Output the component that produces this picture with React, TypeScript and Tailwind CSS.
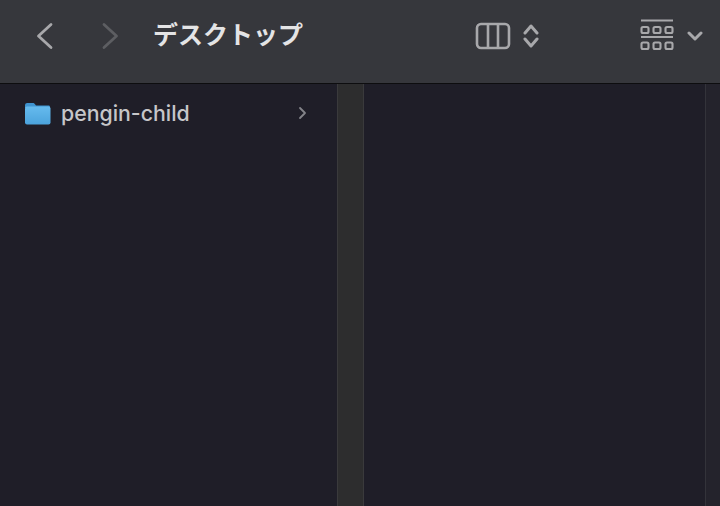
export default function App() {
  const font = { fontFamily: '"Inter","Noto Sans CJK JP",sans-serif' };
  return (
    <div className="w-[720px] h-[506px] flex flex-col overflow-hidden bg-[#1f1e28]" style={font}>
      <header className="h-[84px] shrink-0 flex items-center bg-[#36373c] border-b border-[#0d0d0f] text-[#b4b4b6] relative">
        <div className="flex items-center pl-[36px] pb-[12px]">
          <svg width="18" height="28" viewBox="0 0 18 28" fill="none" stroke="#a8a8ab" strokeWidth="2.8" strokeLinecap="round" strokeLinejoin="round"><path d="M15 2.500 2.500 14 15 25.500" /></svg>
          <svg className="ml-[47px]" width="18" height="28" viewBox="0 0 18 28" fill="none" stroke="#5d5e62" strokeWidth="2.8" strokeLinecap="round" strokeLinejoin="round"><path d="M3 2.500 15.500 14 3 25.500" /></svg>
          <span className="ml-[34px] mt-[-2px] text-[25px] leading-[32px] font-semibold text-[#e4e4e5] whitespace-nowrap">デスクトップ</span>
        </div>
        <div className="ml-auto flex items-center pb-[12px]">
          <svg width="36" height="28" viewBox="0 0 36 28" fill="none" stroke="#a8a8ab" strokeWidth="2.6"><rect x="2" y="2" width="32" height="24" rx="4" /><path d="M13 2v24M23 2v24" /></svg>
          <svg className="ml-[12px]" width="16" height="26" viewBox="0 0 16 26" fill="none" stroke="#a8a8ab" strokeWidth="3" strokeLinecap="round" strokeLinejoin="round"><path d="M2 10 8 3l6 7M2 16l6 7 6-7" /></svg>
          <svg className="ml-[101px]" width="34" height="34" viewBox="0 0 34 34" fill="none" stroke="#a8a8ab" strokeWidth="2.1"><path d="M1 1.500h32M1 18h32" /><rect x="1.500" y="8" width="7" height="6" rx="1.500" /><rect x="13.500" y="8" width="7" height="6" rx="1.500" /><rect x="25.500" y="8" width="7" height="6" rx="1.500" /><rect x="1.500" y="23.500" width="7" height="6.500" rx="1.500" /><rect x="13.500" y="23.500" width="7" height="6.500" rx="1.500" /><rect x="25.500" y="23.500" width="7" height="6.500" rx="1.500" /></svg>
          <svg className="ml-[13px] mr-[17px]" width="16" height="12" viewBox="0 0 16 12" fill="none" stroke="#a8a8ab" strokeWidth="3" strokeLinecap="round" strokeLinejoin="round"><path d="M2 3l6 6 6-6" /></svg>
        </div>
      </header>
      <main className="flex-1 flex min-h-0">
        <section className="w-[337px] shrink-0 pt-[15px]">
          <div className="h-[28px] flex items-center pl-[24px] pr-[30px]">
            <svg width="27" height="24" viewBox="0 0 27 24">
              <defs>
                <linearGradient id="fold" x1="0" y1="0" x2="0" y2="1"><stop offset="0" stopColor="#66bbee" /><stop offset="1" stopColor="#4ba3dc" /></linearGradient>
              </defs>
              <path d="M1 4.500C1 2.800 2 2 3.200 2h5.600c1 0 1.600.4 2.200 1.200L12 4.500h12.500c1 0 1.500.7 1.500 1.600V7H1z" fill="#3f94d0" />
              <rect x="1" y="5.500" width="25.500" height="18" rx="2" fill="url(#fold)" />
            </svg>
            <span className="ml-[10px] text-[21.300px] leading-[28px] font-medium text-[#c6c6c9]">pengin-child</span>
            <svg className="ml-auto" width="9" height="14" viewBox="0 0 9 14" fill="none" stroke="#84848a" strokeWidth="1.800" strokeLinecap="round" strokeLinejoin="round"><path d="M2 2l5 5-5 5" /></svg>
          </div>
        </section>
        <div className="w-[27px] shrink-0 bg-[#2d2d2e] border-x border-[#3a3a3c]" />
        <section className="w-[341px] shrink-0" />
        <div className="w-[15px] shrink-0 bg-[#24232c] border-l border-[#33333a]" />
      </main>
    </div>
  );
}
